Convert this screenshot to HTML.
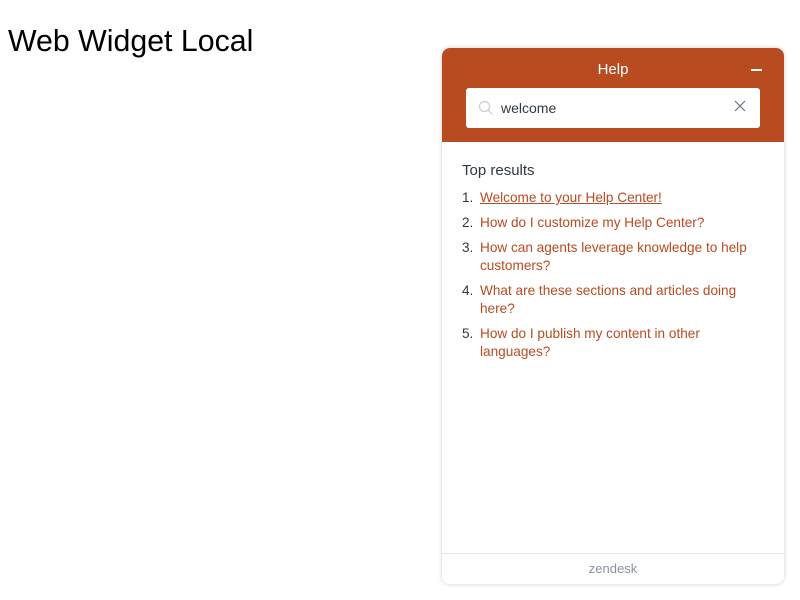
<!DOCTYPE html>
<html><head><meta charset="utf-8"><style>
body{margin:0;width:800px;height:600px;background:#fff;font-family:"Liberation Sans",sans-serif;position:relative;overflow:hidden}
h1{position:absolute;left:8px;top:22px;margin:0;font-weight:normal;font-size:30.3px;line-height:40px;color:#000}
.w{position:absolute;left:442px;top:48px;width:342px;height:536px;border-radius:8px;background:#fff;box-shadow:0 0 4px rgba(0,0,0,.2);overflow:hidden}
.hd{height:94px;background:#b84b20;position:relative}
.t{position:absolute;left:0;right:0;top:13px;text-align:center;color:#fff;font-size:15px}
.min{position:absolute;left:309px;top:21px;width:11px;height:2px;background:#fff}
.s{position:absolute;left:24px;top:40px;width:294px;height:40px;background:#fff;border-radius:3px}
.s span{position:absolute;left:35px;top:12px;font-size:14px;color:#2f3941}
.ft{position:absolute;left:0;right:0;bottom:0;height:30px;border-top:1px solid #e6e6e6;text-align:center;font-size:13px;line-height:30px;color:#87929d}
.tr{position:absolute;left:20px;top:114px;font-size:15px;color:#2f3941}
ol{position:absolute;left:20px;top:141px;margin:0;padding:0;list-style:none;width:304px}
li{position:relative;padding-left:18px;font-size:13.6px;line-height:18px;color:#b84b20;margin-bottom:7px}
li b{position:absolute;left:0;font-weight:normal;color:#2f3941}
</style></head><body>
<h1>Web Widget Local</h1>
<div class="w">
<div class="hd"><div class="t">Help</div><div class="min"></div>
<div class="s"><svg style="position:absolute;left:12px;top:12px" width="16" height="16" viewBox="0 0 16 16"><circle cx="6.5" cy="6.5" r="5" fill="none" stroke="#ccc" stroke-width="1.2"/><path d="M10 10l4.5 4.5" stroke="#ccc" stroke-width="1.2"/></svg><span>welcome</span>
<svg style="position:absolute;left:268px;top:12px" width="12" height="12" viewBox="0 0 12 12"><path d="M1 1l10 10M11 1L1 11" stroke="#68737d" stroke-width="1.2"/></svg></div></div>
<div class="tr">Top results</div>
<ol>
<li><b>1.</b><u>Welcome to your Help Center!</u></li>
<li><b>2.</b>How do I customize my Help Center?</li>
<li><b>3.</b>How can agents leverage knowledge to help customers?</li>
<li><b>4.</b>What are these sections and articles doing here?</li>
<li><b>5.</b>How do I publish my content in other languages?</li>
</ol>
<div class="ft">zendesk</div>
</div>
</body></html>
